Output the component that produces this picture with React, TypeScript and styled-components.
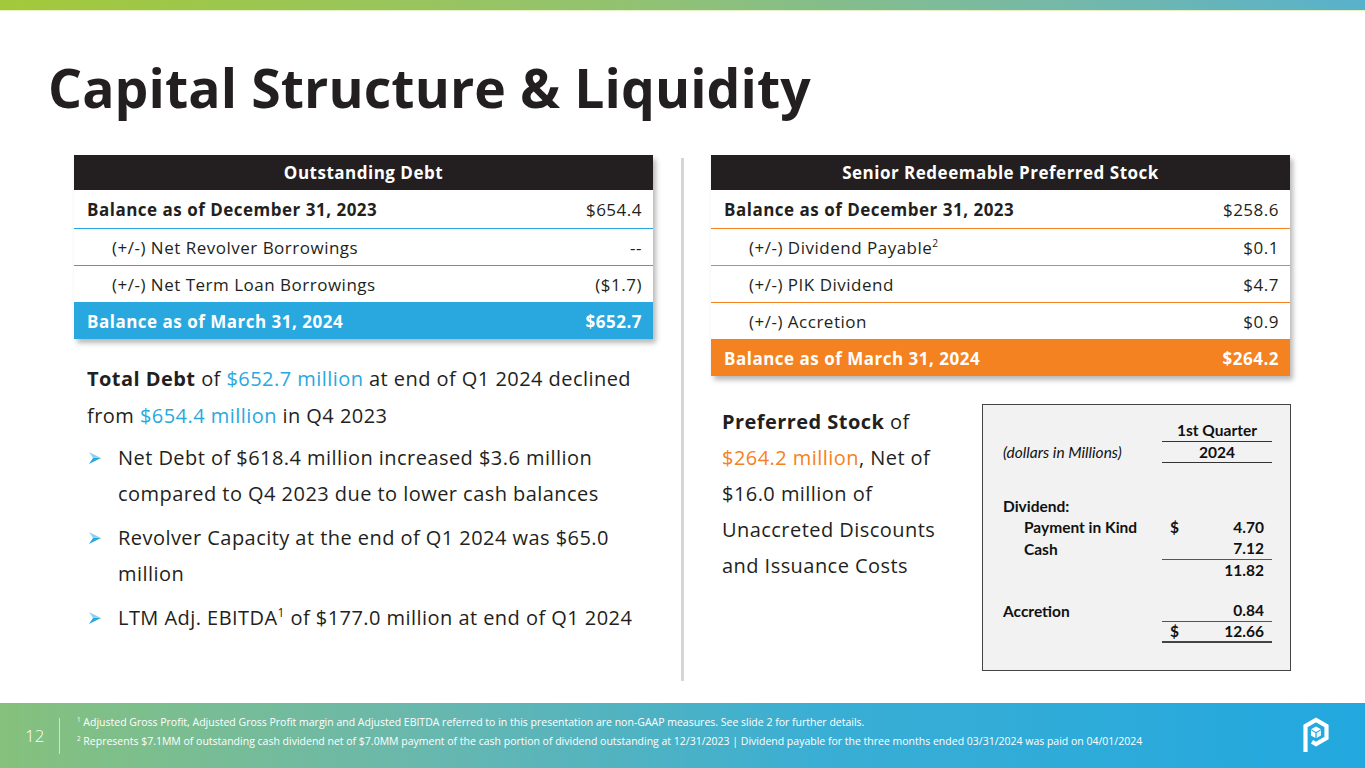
import React from "react";
import styled, { createGlobalStyle } from "styled-components";

const GlobalStyle = createGlobalStyle`
  html, body { margin: 0; padding: 0; background: #ffffff; }
  body { font-family: "Open Sans", "Liberation Sans", sans-serif; color: #231f20; }
  * { box-sizing: border-box; }
`;

const BLUE = "#29a8e0";
const ORANGE = "#f58220";

const debtRows = [
  { label: "(+/-) Net Revolver Borrowings", value: "--" },
  { label: "(+/-) Net Term Loan Borrowings", value: "($1.7)" },
];

const stockRows = [
  { label: "(+/-) Dividend Payable", sup: "2", value: "$0.1" },
  { label: "(+/-) PIK Dividend", value: "$4.7" },
  { label: "(+/-) Accretion", value: "$0.9" },
];

const bullets = [
  ["Net Debt of $618.4 million increased $3.6 million", "compared to Q4 2023 due to lower cash balances"],
  ["Revolver Capacity at the end of Q1 2024 was $65.0", "million"],
];

const Arrow = () => (
  <svg width="14" height="14" viewBox="0 0 14 14">
    <polygon points="1,1 13,7 5,7" fill="#8fd3f2" />
    <polygon points="1,13 13,7 5,7" fill={BLUE} />
  </svg>
);

const Logo = () => (
  <svg width="30" height="38" viewBox="0 0 30 38">
    <path
      d="M4.5 36 V10 L15 4 L25.5 10 V22 L15 28 L11 25.7"
      fill="none"
      stroke="#ffffff"
      strokeWidth="4.2"
      strokeLinejoin="miter"
    />
    <polygon points="15,10.5 20,13.3 15,16.1 10,13.3" fill="#ffffff" />
    <polygon points="10,14.3 14.4,16.9 14.4,22 10,19.4" fill="#ffffff" />
    <polygon points="20,14.3 15.6,16.9 15.6,22 20,19.4" fill="#e6f5fc" />
  </svg>
);

const App = () => {
  return (
    <>
      <GlobalStyle />
      <Slide>
        <TopBar />
        <Title>Capital Structure &amp; Liquidity</Title>
        <Content>
          <Column>
            <Table>
              <TableHeader>Outstanding Debt</TableHeader>
              <Row $line={BLUE} $first>
                <Label $bold>Balance as of December 31, 2023</Label>
                <Value>$654.4</Value>
              </Row>
              {debtRows.map((r) => (
                <Row key={r.label} $line={BLUE}>
                  <Label $indent>{r.label}</Label>
                  <Value>{r.value}</Value>
                </Row>
              ))}
              <Row $line={BLUE} $fill={BLUE}>
                <Label $bold>Balance as of March 31, 2024</Label>
                <Value $bold>$652.7</Value>
              </Row>
            </Table>

            <Summary>
              <Lead>
                <Line>
                  <b>Total Debt</b> of <Accent $color={BLUE}>$652.7 million</Accent> at end of Q1 2024 declined
                </Line>
                <Line>
                  from <Accent $color={BLUE}>$654.4 million</Accent> in Q4 2023
                </Line>
              </Lead>
              <Bullets>
                {bullets.map((lines) => (
                  <Bullet key={lines[0]}>
                    <BulletMark><Arrow /></BulletMark>
                    <div>
                      {lines.map((l) => (
                        <Line key={l}>{l}</Line>
                      ))}
                    </div>
                  </Bullet>
                ))}
                <Bullet>
                  <BulletMark><Arrow /></BulletMark>
                  <Line>LTM Adj. EBITDA<Sup>1</Sup> of $177.0 million at end of Q1 2024</Line>
                </Bullet>
              </Bullets>
            </Summary>
          </Column>

          <Divider />

          <Column>
            <Table>
              <TableHeader>Senior Redeemable Preferred Stock</TableHeader>
              <Row $line={ORANGE} $first>
                <Label $bold>Balance as of December 31, 2023</Label>
                <Value>$258.6</Value>
              </Row>
              {stockRows.map((r) => (
                <Row key={r.label} $line={ORANGE}>
                  <Label $indent>
                    {r.label}
                    {r.sup && <Sup>{r.sup}</Sup>}
                  </Label>
                  <Value>{r.value}</Value>
                </Row>
              ))}
              <Row $line={ORANGE} $fill={ORANGE}>
                <Label $bold>Balance as of March 31, 2024</Label>
                <Value $bold>$264.2</Value>
              </Row>
            </Table>

            <StockArea>
              <StockText>
                <Line><b>Preferred Stock</b> of</Line>
                <Line><Accent $color={ORANGE}>$264.2 million</Accent>, Net of</Line>
                <Line>$16.0 million of</Line>
                <Line>Unaccreted Discounts</Line>
                <Line>and Issuance Costs</Line>
              </StockText>
              <Box>
                <BoxRow>
                  <BoxLabel />
                  <BoxHead $line>1st Quarter</BoxHead>
                </BoxRow>
                <BoxRow>
                  <BoxLabel $italic>(dollars in Millions)</BoxLabel>
                  <BoxHead $line>2024</BoxHead>
                </BoxRow>
                <BoxGap $h={32} />
                <BoxRow>
                  <BoxLabel>Dividend:</BoxLabel>
                  <BoxValue />
                </BoxRow>
                <BoxRow>
                  <BoxLabel $indent>Payment in Kind</BoxLabel>
                  <BoxValue><span>$</span><span>4.70</span></BoxValue>
                </BoxRow>
                <BoxRow>
                  <BoxLabel $indent>Cash</BoxLabel>
                  <BoxValue $line><span /><span>7.12</span></BoxValue>
                </BoxRow>
                <BoxRow>
                  <BoxLabel />
                  <BoxValue><span /><span>11.82</span></BoxValue>
                </BoxRow>
                <BoxGap $h={19} />
                <BoxRow>
                  <BoxLabel>Accretion</BoxLabel>
                  <BoxValue $line><span /><span>0.84</span></BoxValue>
                </BoxRow>
                <BoxRow>
                  <BoxLabel />
                  <BoxValue $double><span>$</span><span>12.66</span></BoxValue>
                </BoxRow>
              </Box>
            </StockArea>
          </Column>
        </Content>

        <Footer>
          <PageNum>12</PageNum>
          <FooterRule />
          <Notes>
            <Note><Sup>1</Sup> Adjusted Gross Profit, Adjusted Gross Profit margin and Adjusted EBITDA referred to in this presentation are non-GAAP measures. See slide 2 for further details.</Note>
            <Note><Sup>2</Sup> Represents $7.1MM of outstanding cash dividend net of $7.0MM payment of the cash portion of dividend outstanding at 12/31/2023 | Dividend payable for the three months ended 03/31/2024 was paid on 04/01/2024</Note>
          </Notes>
          <LogoWrap><Logo /></LogoWrap>
        </Footer>
      </Slide>
    </>
  );
};

const Slide = styled.div`
  width: 1365px;
  height: 768px;
  display: flex;
  flex-direction: column;
  overflow: hidden;
  background: #ffffff;
`;

const TopBar = styled.div`
  height: 11px;
  background: linear-gradient(90deg, #a3c93a 0%, #93c26f 45%, #78b9a4 75%, #58b1cc 100%);
  border-bottom: 1px solid #e4f2c6;
`;

const Title = styled.h1`
  margin: 0;
  padding: 46px 0 0 48px;
  font-size: 53.5px;
  line-height: 62px;
  font-weight: 700;
  color: #231f20;
  letter-spacing: 0.1px;
`;

const Content = styled.div`
  display: grid;
  grid-template-columns: 579px 58px 579px;
  padding-left: 74px;
  margin-top: 36px;
`;

const Column = styled.div`
  display: flex;
  flex-direction: column;
`;

const Divider = styled.div`
  width: 3px;
  height: 523px;
  margin-top: 3px;
  justify-self: center;
  background: #d6d6d6;
`;

const Table = styled.div`
  display: flex;
  flex-direction: column;
  box-shadow: 3px 4px 5px rgba(0, 0, 0, 0.28);
`;

const TableHeader = styled.div`
  height: 35px;
  background: #231f20;
  color: #ffffff;
  font-weight: 700;
  font-size: 17px;
  letter-spacing: 0.5px;
  display: flex;
  align-items: center;
  justify-content: center;
`;

const Row = styled.div<{ $line: string; $first?: boolean; $fill?: string }>`
  height: ${(p) => (p.$first ? "38px" : "37px")};
  display: flex;
  align-items: center;
  justify-content: space-between;
  padding: 0 11px 0 13px;
  font-size: 17px;
  letter-spacing: 0.5px;
  background: ${(p) => p.$fill || "#ffffff"};
  color: ${(p) => (p.$fill ? "#ffffff" : "#231f20")};
  border-top: ${(p) => (p.$first ? "none" : `1px solid ${p.$line}`)};
`;

const Label = styled.span<{ $bold?: boolean; $indent?: boolean }>`
  font-weight: ${(p) => (p.$bold ? 700 : 400)};
  padding-left: ${(p) => (p.$indent ? "25px" : "0")};
`;

const Value = styled.span<{ $bold?: boolean }>`
  font-weight: ${(p) => (p.$bold ? 700 : 400)};
`;

const Sup = styled.sup`
  font-size: 0.6em;
  line-height: 0;
  vertical-align: super;
`;

const Summary = styled.div`
  padding: 21px 0 0 13px;
  font-size: 20px;
  letter-spacing: 0.45px;
  color: #231f20;
`;

const Lead = styled.div`
  line-height: 37px;
`;

const Line = styled.div`
  white-space: nowrap;
`;

const Accent = styled.span<{ $color: string }>`
  color: ${(p) => p.$color};
`;

const Bullets = styled.ul`
  list-style: none;
  margin: 6px 0 0;
  padding: 0;
  display: flex;
  flex-direction: column;
  gap: 8px;
`;

const Bullet = styled.li`
  display: flex;
  line-height: 36px;
`;

const BulletMark = styled.span`
  width: 31px;
  flex: none;
  padding-left: 1px;
  display: flex;
  align-items: flex-start;
  padding-top: 11px;
`;

const StockArea = styled.div`
  display: flex;
  align-items: flex-start;
  justify-content: space-between;
  margin-top: 28px;
`;

const StockText = styled.div`
  padding-left: 11px;
  font-size: 20px;
  letter-spacing: 0.45px;
  line-height: 36px;
  color: #231f20;
`;

const Box = styled.div`
  width: 309px;
  height: 267px;
  margin-right: -1px;
  background: #f2f2f2;
  border: 1px solid #444444;
  padding: 15px 18px 0 20px;
  font-family: Lato, "Open Sans", sans-serif;
  font-size: 15.5px;
  font-weight: 700;
  color: #111111;
`;

const BoxRow = styled.div`
  display: grid;
  grid-template-columns: 159px 110px;
  height: 21.5px;
  align-items: stretch;
`;

const BoxGap = styled.div<{ $h: number }>`
  height: ${(p) => p.$h}px;
`;

const BoxLabel = styled.div<{ $italic?: boolean; $indent?: boolean }>`
  display: flex;
  align-items: center;
  font-style: ${(p) => (p.$italic ? "italic" : "normal")};
  font-weight: ${(p) => (p.$italic ? 400 : 700)};
  padding-left: ${(p) => (p.$indent ? "21px" : "0")};
`;

const BoxHead = styled.div<{ $line?: boolean }>`
  display: flex;
  align-items: center;
  justify-content: center;
  border-bottom: ${(p) => (p.$line ? "1px solid #333333" : "none")};
`;

const BoxValue = styled.div<{ $line?: boolean; $double?: boolean }>`
  display: flex;
  align-items: center;
  justify-content: space-between;
  padding: 0 8px 0 8px;
  border-bottom: ${(p) =>
    p.$double ? "2.5px solid #444444" : p.$line ? "1px solid #555555" : "none"};
`;

const Footer = styled.div`
  margin-top: auto;
  height: 65px;
  display: flex;
  align-items: center;
  padding: 0 34px 0 25px;
  background: linear-gradient(90deg, #86c17c 0%, #6ab8ac 30%, #3aaed4 60%, #22a8df 100%);
  color: #ffffff;
`;

const PageNum = styled.div`
  font-size: 17px;
  font-weight: 300;
  width: 34px;
`;

const FooterRule = styled.div`
  width: 1px;
  height: 36px;
  background: rgba(255, 255, 255, 0.6);
  margin-right: 17px;
`;

const Notes = styled.div`
  flex: 1;
  display: flex;
  flex-direction: column;
  gap: 6px;
  padding-bottom: 8px;
  font-size: 10.5px;
  line-height: 13px;
`;

const Note = styled.div`
  white-space: nowrap;
`;

const LogoWrap = styled.div`
  display: flex;
  align-items: center;
  margin-top: -2px;
`;

export default App;
